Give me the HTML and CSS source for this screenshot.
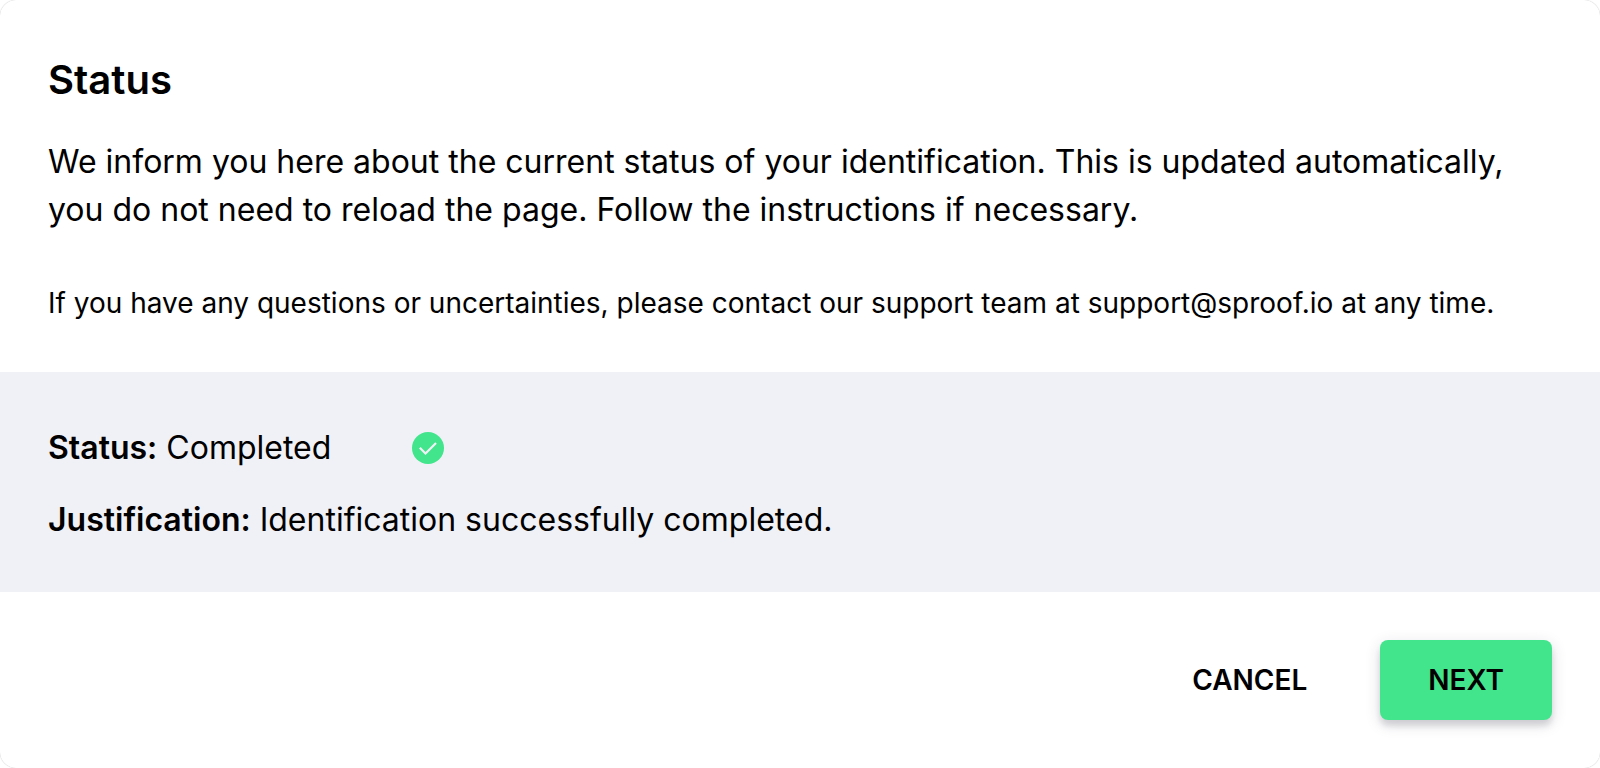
FILE: index.html
```html
<!DOCTYPE html>
<html lang="en">
<head>
    <meta charset="UTF-8">
    <meta name="viewport" content="width=device-width, initial-scale=1.0">
    <title>Status</title>
    <link rel="stylesheet" href="styles.css">
</head>
<body>
    <main class="dialog">
        <section class="intro">
            <h1>Status</h1>
            <p class="lead">We inform you here about the current status of your identification. This is updated automatically, you do not need to reload the page. Follow the instructions if necessary.</p>
            <p class="support">If you have any questions or uncertainties, please contact our support team at support@sproof.io at any time.</p>
        </section>
        <section class="result">
            <div class="row">
                <p><strong>Status:</strong> Completed</p>
                <svg class="check" viewBox="0 0 32 32" aria-hidden="true">
                    <circle cx="16" cy="16" r="16" fill="#43e58c"/>
                    <path d="M7.8 15.8l5.7 5.7L24 11" fill="none" stroke="#f0f1f7" stroke-width="2.2"/>
                </svg>
            </div>
            <p><strong>Justification:</strong> Identification successfully completed.</p>
        </section>
        <div class="actions">
            <button type="button" class="btn">CANCEL</button>
            <button type="button" class="btn btn-next">NEXT</button>
        </div>
    </main>
</body>
</html>
```
FILE: styles.css
```css
body {
    margin: 0;
    background: #fff;
    color: #000;
    font-family: "Inter", sans-serif;
}
.dialog {
    background: #fff;
    border-radius: 16px;
    box-shadow: 0 0 1px rgba(0, 0, 0, 0.3);
}
.intro {
    padding: 56px 48px 48px;
}
h1 {
    margin: 0 0 34px;
    font-size: 40px;
    line-height: 48px;
    font-weight: 600;
}
p {
    margin: 0;
    font-size: 32px;
    line-height: 48px;
}
strong {
    font-weight: 600;
}
.intro .support {
    margin-top: 48px;
    font-size: 28px;
    line-height: 42px;
}
.result {
    padding: 52px 48px 48px;
    background: #f0f1f7;
}
.row {
    display: flex;
    align-items: center;
    gap: 81px;
    margin-bottom: 24px;
}
.check {
    width: 32px;
    height: 32px;
}
.actions {
    display: flex;
    justify-content: flex-end;
    gap: 25px;
    padding: 48px;
}
.btn {
    padding: 0 48px;
    height: 80px;
    border: none;
    border-radius: 8px;
    background: none;
    color: #000;
    font-family: inherit;
    font-size: 28px;
    font-weight: 600;
    cursor: pointer;
}
.btn-next {
    background: #43e58c;
    box-shadow: 0 6px 6px rgba(0, 0, 0, 0.12), 0 4px 16px rgba(40, 40, 100, 0.14);
}
```
